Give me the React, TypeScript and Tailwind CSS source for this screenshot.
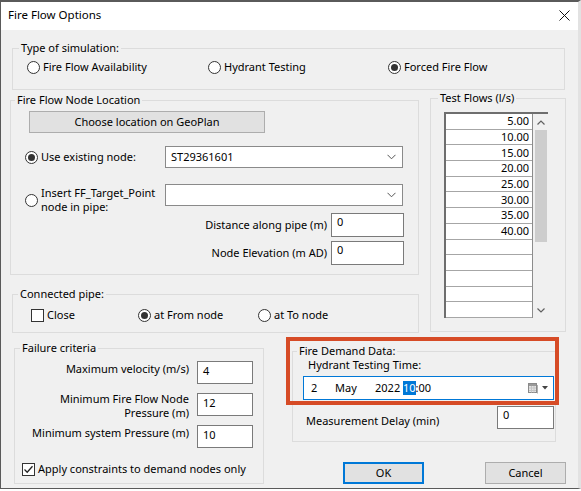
import React from "react";

type RadioProps = { label: React.ReactNode; checked?: boolean; className?: string };

function Radio({ label, checked, className = "" }: RadioProps) {
  return (
    <div className={`flex h-[16px] items-center ${className}`}>
      <span className="flex h-[13px] w-[13px] shrink-0 items-center justify-center rounded-full border border-[#333] bg-white">
        {checked ? <span className="h-[7px] w-[7px] rounded-full bg-[#333]" /> : null}
      </span>
      <span className="ml-[3px] whitespace-nowrap">{label}</span>
    </div>
  );
}

function Checkbox({ label, checked, className = "" }: RadioProps) {
  return (
    <div className={`flex h-[16px] items-center ${className}`}>
      <span className="flex h-[13px] w-[13px] shrink-0 items-center justify-center border border-[#333] bg-white">
        {checked ? (
          <svg width="11" height="11" viewBox="0 0 11 11">
            <polyline points="1.5,5.5 4.2,8.2 9.5,2.2" fill="none" stroke="#222" strokeWidth="1.3" />
          </svg>
        ) : null}
      </span>
      <span className="ml-[3px] whitespace-nowrap">{label}</span>
    </div>
  );
}

function TextBox({ value, className = "" }: { value: string; className?: string }) {
  return (
    <div className={`border border-[#7a7a7a] bg-white pl-[5px] pt-[1px] leading-[14px] ${className}`}>
      {value}
    </div>
  );
}

function Chevron() {
  return (
    <svg width="9" height="6" viewBox="0 0 9 6">
      <polyline points="0.5,0.8 4.5,4.8 8.5,0.8" fill="none" stroke="#555" strokeWidth="1" />
    </svg>
  );
}

function ComboBox({ value }: { value: string }) {
  return (
    <div className="flex h-[22px] w-[238px] items-center justify-between border border-[#8a8a8a] bg-white pl-[5px] pr-[6px]">
      <span>{value}</span>
      <Chevron />
    </div>
  );
}

const flows = ["5.00", "10.00", "15.00", "20.00", "25.00", "30.00", "35.00", "40.00", "", "", "", "", ""];

export default function App() {
  return (
    <div className="h-[491px] w-[581px] overflow-hidden bg-white font-['Noto_Sans',sans-serif] text-[11px] leading-[14px] text-black">
      <div className="flex h-[489px] flex-col border-b border-l border-t-2 border-[#5a5a5a] border-r-[3px] border-r-[#e2e2e2] bg-[#f0f0f0]">
        {/* title bar */}
        <div className="flex h-[28px] shrink-0 items-center justify-between bg-white pb-[2px] pl-[7px] pr-[8px]">
          <span className="text-[11.5px]">Fire Flow Options</span>
          <svg width="11" height="11" viewBox="0 0 11 11">
            <line x1="0.5" y1="0.5" x2="10.5" y2="10.5" stroke="#111" strokeWidth="1" />
            <line x1="10.5" y1="0.5" x2="0.5" y2="10.5" stroke="#111" strokeWidth="1" />
          </svg>
        </div>

        {/* type of simulation */}
        <fieldset className="ml-[11px] mt-[11px] w-[553px] border border-[#dcdcdc]">
          <legend className="ml-[6px] px-[2px] leading-[14px]">Type of simulation:</legend>
          <div className="flex pb-[14px] pl-[14px] pt-[4px]">
            <Radio className="w-[181px]" label="Fire Flow Availability" />
            <Radio className="w-[180px]" label="Hydrant Testing" />
            <Radio checked label="Forced Fire Flow" />
          </div>
        </fieldset>

        <div className="flex items-start">
          <div className="ml-[9px] flex flex-col">
            {/* node location */}
            <fieldset className="mt-[3px] w-[409px] border border-[#dcdcdc]">
              <legend className="ml-[4px] px-[2px] leading-[14px]">Fire Flow Node Location</legend>
              <div className="pb-[9px] pl-[14px] pr-[14px] pt-[4px]">
                <button className="ml-[4px] flex h-[22px] w-[236px] items-center justify-center border border-[#adadad] bg-[#e1e1e1]">
                  Choose location on GeoPlan
                </button>
                <div className="mt-[13px] flex h-[22px] items-center">
                  <Radio checked className="w-[140px]" label="Use existing node:" />
                  <ComboBox value="ST29361601" />
                </div>
                <div className="mt-[16px] flex h-[22px] items-start">
                  <div className="mt-[2px] flex h-[28px] w-[140px] items-center">
                    <span className="h-[13px] w-[13px] shrink-0 rounded-full border border-[#333] bg-white" />
                    <span className="ml-[3px] leading-[14px]">
                      Insert FF_Target_Point
                      <br />
                      node in pipe:
                    </span>
                  </div>
                  <ComboBox value="" />
                </div>
                <div className="mt-[7px] flex h-[24px] items-center justify-end">
                  <span className="mr-[4px]">Distance along pipe (m)</span>
                  <TextBox value="0" className="h-[24px] w-[73px]" />
                </div>
                <div className="mt-[4px] flex h-[24px] items-center justify-end">
                  <span className="mr-[4px]">Node Elevation (m AD)</span>
                  <TextBox value="0" className="h-[24px] w-[73px]" />
                </div>
              </div>
            </fieldset>

            {/* connected pipe */}
            <fieldset className="ml-[2px] mt-[12px] w-[407px] border border-[#dcdcdc]">
              <legend className="ml-[5px] px-[2px] leading-[14px]">Connected pipe:</legend>
              <div className="flex pb-[9px] pl-[18px] pt-[6px]">
                <Checkbox className="w-[107px]" label="Close" />
                <Radio checked className="w-[120px]" label="at From node" />
                <Radio label="at To node" />
              </div>
            </fieldset>
          </div>

          {/* test flows */}
          <fieldset className="ml-[11px] mt-[1px] w-[136px] border border-[#dcdcdc]">
            <legend className="ml-[7px] px-[2px] leading-[14px]">Test Flows (l/s)</legend>
            <div className="pb-[13px] pl-[13px] pt-[7px]">
              <div className="flex h-[206px] w-[104px] border-l-2 border-t-2 border-[#6e6e6e] border-b-[#e8e8e8] border-r-[#e8e8e8]">
                <div className="flex w-[87px] flex-col border-r border-[#8c8c8c] bg-white">
                  {flows.map((v, i) => (
                    <div
                      key={i}
                      className="flex h-[15.7px] shrink-0 items-center justify-end border-b border-[#a6a6a6] pr-[3px] leading-[14px]"
                    >
                      {v}
                    </div>
                  ))}
                </div>
                <div className="flex w-[15px] flex-col items-center bg-[#f0f0f0]">
                  <div className="flex h-[16px] items-center justify-center">
                    <svg width="8" height="5" viewBox="0 0 8 5">
                      <polyline points="0.5,4.5 4,1 7.5,4.5" fill="none" stroke="#606060" strokeWidth="1.2" />
                    </svg>
                  </div>
                  <div className="h-[112px] w-[12px] bg-[#cdcdcd]" />
                  <div className="flex-1" />
                  <div className="flex h-[16px] items-center justify-center">
                    <svg width="8" height="5" viewBox="0 0 8 5">
                      <polyline points="0.5,0.5 4,4 7.5,0.5" fill="none" stroke="#606060" strokeWidth="1.2" />
                    </svg>
                  </div>
                </div>
              </div>
            </div>
          </fieldset>
        </div>

        <div className="relative flex items-start">
          {/* failure criteria */}
          <fieldset className="ml-[13px] mt-[8px] w-[250px] border border-[#dcdcdc]">
            <legend className="ml-[5px] px-[2px] leading-[14px]">Failure criteria</legend>
            <div className="pb-[6px] pr-[10px] pt-[6px]">
              <div className="flex h-[23px] items-start justify-end">
                <span className="mr-[8px] mt-[1px] text-right">Maximum velocity (m/s)</span>
                <TextBox value="4" className="h-[23px] w-[56px] pt-[2px]" />
              </div>
              <div className="mt-[9px] flex h-[23px] items-start justify-end">
                <span className="-mt-[1px] mr-[8px] text-right leading-[14px]">
                  Minimum Fire Flow Node
                  <br />
                  Pressure (m)
                </span>
                <TextBox value="12" className="h-[23px] w-[56px] pt-[2px]" />
              </div>
              <div className="mt-[9px] flex h-[23px] items-start justify-end">
                <span className="mr-[8px] mt-[1px] text-right">Minimum system Pressure (m)</span>
                <TextBox value="10" className="h-[23px] w-[56px] pt-[2px]" />
              </div>
              <Checkbox checked className="ml-[7px] mt-[13px]" label="Apply constraints to demand nodes only" />
            </div>
          </fieldset>

          <div className="ml-[28px] flex flex-col">
            {/* fire demand data */}
            <fieldset className="mt-[11px] w-[264px] border border-[#dcdcdc]">
              <legend className="ml-[4px] px-[2px] leading-[14px]">Fire Demand Data:</legend>
              <div className="pb-[12px]">
                <div className="pl-[15px]">Hydrant Testing Time:</div>
                <div className="ml-[10px] mt-[4px] flex h-[24px] w-[251px] items-center border border-[#0078d7] bg-white pl-[7px] pr-[5px]">
                  <span className="w-[24px]">2</span>
                  <span className="w-[40px]">May</span>
                  <span className="w-[28px]">2022</span>
                  <span className="bg-[#0078d7] text-white">10</span>
                  <span>:00</span>
                  <span className="flex-1" />
                  <svg width="10" height="11" viewBox="0 0 10 11">
                    <rect x="0.5" y="0.5" width="8" height="9" fill="#e4e4e4" stroke="#8a8a8a" />
                    <rect x="1" y="1" width="7" height="2" fill="#9a9a9a" />
                    <line x1="1" y1="5" x2="8" y2="5" stroke="#c4c4c4" />
                    <line x1="1" y1="7.5" x2="8" y2="7.5" stroke="#c4c4c4" />
                    <line x1="3.5" y1="3" x2="3.5" y2="9.5" stroke="#c4c4c4" />
                    <line x1="6" y1="3" x2="6" y2="9.5" stroke="#c4c4c4" />
                    <line x1="9.5" y1="2" x2="9.5" y2="10.5" stroke="#b0b0b0" />
                  </svg>
                  <svg className="ml-[4px]" width="6" height="4" viewBox="0 0 6 4">
                    <polygon points="0,0 6,0 3,3.5" fill="#444" />
                  </svg>
                </div>
                <div className="mt-[6px] flex h-[23px] items-end pl-[13px] pr-[1px]">
                  <span className="mb-[1px]">Measurement Delay (min)</span>
                  <span className="flex-1" />
                  <TextBox value="0" className="h-[23px] w-[57px] self-start" />
                </div>
              </div>
            </fieldset>

            <div className="mt-[20px] flex">
              <button className="ml-[51px] flex h-[22px] w-[81px] items-center justify-center border-2 border-[#0078d7] bg-[#e1e1e1]">
                OK
              </button>
              <button className="ml-[61px] flex h-[22px] w-[81px] items-center justify-center border border-[#adadad] bg-[#e1e1e1]">
                Cancel
              </button>
            </div>
          </div>

          {/* annotation highlight */}
          <div className="pointer-events-none absolute left-[285px] top-[4px] h-[68px] w-[273px] border-4 border-[#d64b26]" />
        </div>
      </div>
    </div>
  );
}
